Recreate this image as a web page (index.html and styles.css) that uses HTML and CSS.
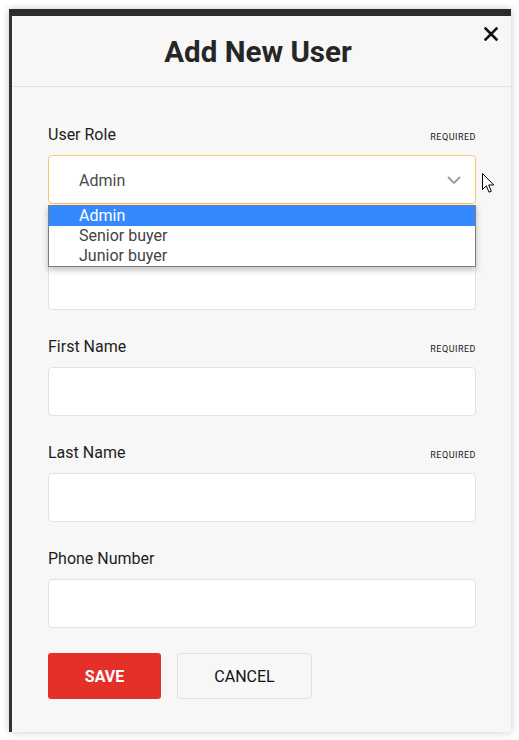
FILE: index.html
```html
<!DOCTYPE html>
<html lang="en">
<head>
  <meta charset="UTF-8" />
  <meta name="viewport" content="width=device-width, initial-scale=1.0"/>
  <title>Add New User</title>
  <link rel="stylesheet" href="styles.css">
</head>
<body>
  <div class="modal">
    <header class="modal-header">
      <h1>Add New User</h1>
      <button class="close" aria-label="Close">
        <svg width="14" height="14" viewBox="0 0 14 14">
          <path d="M1.5 1.5 L12.5 12.5 M12.5 1.5 L1.5 12.5" stroke="#111" stroke-width="2.6" stroke-linecap="square"/>
        </svg>
      </button>
    </header>

    <form class="modal-body">
      <div class="field">
        <div class="label-row">
          <label>User Role</label>
          <span class="required">Required</span>
        </div>
        <div class="select open">
          <span class="select-value">Admin</span>
          <svg class="chevron" width="14" height="8" viewBox="0 0 14 8">
            <path d="M1 1 L7 7 L13 1" fill="none" stroke="#9b9b9b" stroke-width="1.8"/>
          </svg>
          <ul class="options">
            <li class="active">Admin</li>
            <li>Senior buyer</li>
            <li>Junior buyer</li>
          </ul>
        </div>
        <!-- mouse pointer from the screenshot -->
        <svg class="cursor" width="13" height="21" viewBox="0 0 13 21">
          <path d="M0.5 0.5 L0.5 16.5 L4.3 12.8 L7 19.2 L9.3 18.2 L6.7 12 L11.8 12 Z" fill="#fff" stroke="#000" stroke-width="1" stroke-linejoin="miter"/>
        </svg>
      </div>

      <!-- this field sits under the open dropdown -->
      <div class="field covered">
        <div class="label-row">
          <label>Email</label>
          <span class="required">Required</span>
        </div>
        <input type="text">
      </div>

      <div class="field">
        <div class="label-row">
          <label>First Name</label>
          <span class="required">Required</span>
        </div>
        <input type="text">
      </div>

      <div class="field">
        <div class="label-row">
          <label>Last Name</label>
          <span class="required">Required</span>
        </div>
        <input type="text">
      </div>

      <div class="field">
        <div class="label-row">
          <label>Phone Number</label>
        </div>
        <input type="text">
      </div>

      <div class="actions">
        <button type="button" class="btn btn-save">Save</button>
        <button type="button" class="btn btn-cancel">Cancel</button>
      </div>
    </form>
  </div>
</body>
</html>
```

FILE: styles.css
```css
body {
  margin: 0;
  padding: 9px 8px 8px 9px;
  font-family: Roboto, "Liberation Sans", Arial, sans-serif;
  background: #fff;
  color: #222;
}
.modal {
  position: relative;
  background: #f7f7f7;
  border-top: 7px solid #2e2b2f;
  border-left: 3px solid #333;
  box-shadow: 0 0 8px rgba(0,0,0,0.22);
}
.modal-header {
  height: 51px;
  padding: 19px 7px 0 0;
  border-bottom: 1px solid #e2e2e2;
  text-align: center;
}
.modal-header h1 {
  margin: 0;
  font-size: 29.5px;
  line-height: 34px;
  font-weight: 700;
  color: #262626;
}
.close {
  position: absolute;
  top: 11px;
  right: 13px;
  padding: 0;
  border: none;
  background: none;
  width: 14px;
  height: 14px;
  line-height: 0;
  cursor: pointer;
}
.modal-body {
  padding: 38px 35px 33px 36px;
}
.field {
  position: relative;
}
.field + .field {
  margin-top: 27px;
}
.field.covered .label-row {
  visibility: hidden;
}
.label-row {
  display: flex;
  justify-content: space-between;
  align-items: baseline;
  height: 20px;
  margin-bottom: 10px;
}
.label-row label {
  font-size: 16px;
  line-height: 20px;
  color: #1e1e1e;
}
.required {
  font-size: 9px;
  font-weight: 400;
  text-transform: uppercase;
  letter-spacing: 0.5px;
  color: #1a1a1a;
}
input[type="text"], .select {
  display: block;
  box-sizing: border-box;
  width: 100%;
  height: 49px;
  background: #fff;
  border: 1px solid #e2e2e2;
  border-radius: 4px;
  font: inherit;
}
.select {
  position: relative;
  display: flex;
  align-items: center;
  padding: 1px 14px 0 30px;
  border-color: #f5c86e;
}
.select-value {
  flex: 1;
  font-size: 16px;
  color: #4a4a4a;
}
.options {
  position: absolute;
  z-index: 2;
  top: 49px;
  left: -1px;
  right: -1px;
  margin: 0;
  padding: 0;
  list-style: none;
  background: #fff;
  border: 1px solid #7d7d7d;
  box-shadow: 0 3px 6px rgba(0,0,0,0.25);
}
.options li {
  height: 20px;
  line-height: 20px;
  padding-left: 30px;
  font-size: 16px;
  color: #444;
}
.options li.active {
  background: #3389fd;
  color: #fff;
}
.cursor {
  position: absolute;
  top: 48px;
  left: 434px;
  z-index: 3;
}
.actions {
  display: flex;
  gap: 16px;
  margin-top: 25px;
}
.btn {
  height: 46px;
  border-radius: 3px;
  font-family: inherit;
  font-size: 16px;
  text-transform: uppercase;
  cursor: pointer;
}
.btn-save {
  width: 113px;
  background: #e5302a;
  border: none;
  color: #fff;
  font-weight: 700;
}
.btn-cancel {
  width: 135px;
  background: #f7f7f7;
  border: 1px solid #e2e2e2;
  color: #111;
}
```
